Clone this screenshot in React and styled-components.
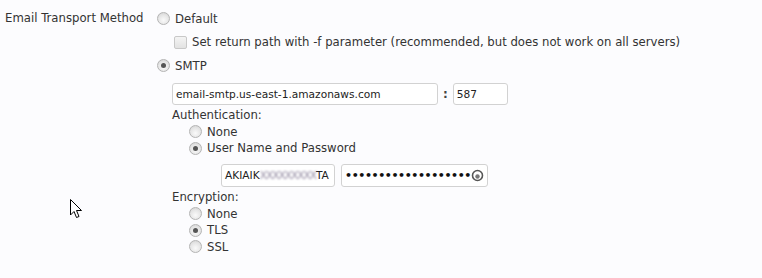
import React from 'react';
import styled, { createGlobalStyle } from 'styled-components';

const GlobalStyle = createGlobalStyle`
  body {
    margin: 0;
    background: #fcfcfe;
    font-family: Tahoma, "DejaVu Sans", Verdana, sans-serif;
    font-size: 11.7px;
    color: #333;
  }
`;

const Page = styled.div`
  position: relative;
  display: flex;
  width: 762px;
  height: 278px;
  padding-top: 7px;
  box-sizing: border-box;
`;

const FieldLabel = styled.div`
  width: 157px;
  padding-left: 5px;
  box-sizing: border-box;
  line-height: 23px;
`;

const Options = styled.div`
  display: flex;
  flex-direction: column;
`;

const OptionRow = styled.label`
  display: flex;
  align-items: center;
  gap: 5px;
  height: ${(p) => (p.small ? 16.7 : 23.5)}px;
  padding-left: ${(p) => p.indent || 0}px;
  white-space: nowrap;
`;

const Radio = styled.span`
  position: relative;
  width: 11px;
  height: 11px;
  border-radius: 50%;
  border: 1px solid #b4b4b4;
  background: radial-gradient(circle at 50% 65%, #fafafa 0%, #e6e6e6 55%, #cfcfcf 100%);
  flex: none;

  &::after {
    content: '';
    display: ${(p) => (p.checked ? 'block' : 'none')};
    position: absolute;
    left: 3px;
    top: 3px;
    width: 5px;
    height: 5px;
    border-radius: 50%;
    background: #555;
  }
`;

const Checkbox = styled.span`
  width: 11px;
  height: 11px;
  border: 1px solid #c8c8c8;
  border-radius: 2px;
  background: linear-gradient(#f4f4f4, #e2e2e2);
  flex: none;
`;

const SmtpBlock = styled.div`
  display: flex;
  flex-direction: column;
  padding-left: 15px;
  margin-top: 5px;
`;

const HostRow = styled.div`
  display: flex;
  align-items: center;
  gap: 5px;
  margin-bottom: 2px;
`;

const Input = styled.div`
  display: flex;
  align-items: center;
  width: ${(p) => p.w}px;
  height: ${(p) => p.h || 22}px;
  box-sizing: border-box;
  padding: 0 3px;
  border: 1px solid #d2d2d2;
  border-radius: 3px;
  background: #fff;
  font-size: 10.6px;
  color: #222;
  white-space: nowrap;
  overflow: hidden;
`;

const Colon = styled.span`
  font-weight: bold;
  font-size: 12px;
  color: #444;
`;

const SubLabel = styled.div`
  height: 16.7px;
  line-height: 16.7px;
`;

const CredsRow = styled.div`
  display: flex;
  gap: 6px;
  padding-left: 49px;
  margin: 7px 0 2px;
`;

const Blurred = styled.span`
  filter: blur(1.2px);
  color: #8f869e;
  letter-spacing: -1px;
`;

const Dots = styled.span`
  flex: 1;
  overflow: hidden;
  letter-spacing: -0.4px;
  font-size: 11px;
  font-weight: bold;
  color: #111;
`;

const Cursor = styled.svg`
  position: absolute;
  left: 70px;
  top: 199px;
`;

const RevealIcon = () => (
  <svg width="13" height="13" viewBox="0 0 13 13" style={{ marginLeft: -4 }}>
    <circle cx="6.5" cy="6.5" r="5" fill="#fff" stroke="#555" strokeWidth="1.6" />
    <circle cx="6.5" cy="7.5" r="2.2" fill="#777" />
  </svg>
);

export default function App() {
  return (
    <>
      <GlobalStyle />
      <Page>
        <FieldLabel>Email Transport Method</FieldLabel>
        <Options>
          <OptionRow>
            <Radio />
            Default
          </OptionRow>
          <OptionRow indent={17}>
            <Checkbox />
            Set return path with -f parameter (recommended, but does not work on all servers)
          </OptionRow>
          <OptionRow>
            <Radio checked />
            SMTP
          </OptionRow>
          <SmtpBlock>
            <HostRow>
              <Input w={266}>email-smtp.us-east-1.amazonaws.com</Input>
              <Colon>:</Colon>
              <Input w={55}>587</Input>
            </HostRow>
            <SubLabel>Authentication:</SubLabel>
            <OptionRow small indent={17}>
              <Radio />
              None
            </OptionRow>
            <OptionRow small indent={17}>
              <Radio checked />
              User Name and Password
            </OptionRow>
            <CredsRow>
              <Input w={114} h={23}>
                AKIAIK<Blurred>XXXXXXXXX</Blurred>TA
              </Input>
              <Input w={147} h={23}>
                <Dots>••••••••••••••••••••</Dots>
                <RevealIcon />
              </Input>
            </CredsRow>
            <SubLabel>Encryption:</SubLabel>
            <OptionRow small indent={17}>
              <Radio />
              None
            </OptionRow>
            <OptionRow small indent={17}>
              <Radio checked />
              TLS
            </OptionRow>
            <OptionRow small indent={17}>
              <Radio />
              SSL
            </OptionRow>
          </SmtpBlock>
        </Options>
        <Cursor width="13" height="20" viewBox="0 0 13 20">
          <path
            d="M0.5 0.5 L0.5 16 L4 12.5 L6.5 18.5 L9 17.5 L6.5 11.5 L11.5 11.5 Z"
            fill="#fff"
            stroke="#000"
            strokeWidth="1"
          />
        </Cursor>
      </Page>
    </>
  );
}
